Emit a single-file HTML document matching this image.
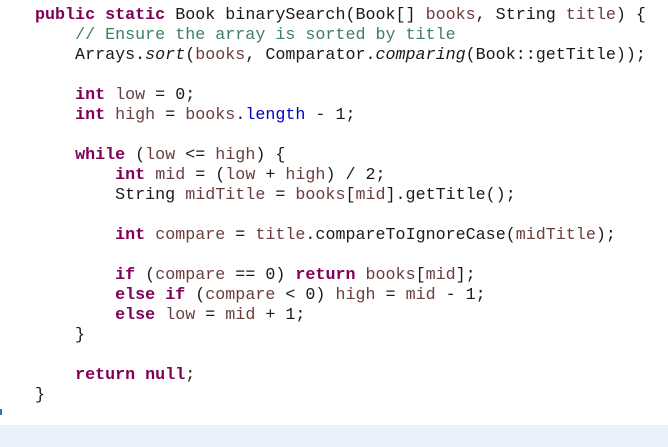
<!DOCTYPE html>
<html><head><style>
body{margin:0;width:668px;height:447px;overflow:hidden;background:#fff;position:relative}
pre{margin:0;position:absolute;left:35px;top:-14px;font-family:"Liberation Mono",monospace;font-size:16.7px;line-height:20px;color:#1a1a1a}
.k{color:#7f0055;font-weight:bold}.p{color:#6a3e3e}.c{color:#3f7f5f}.f{color:#0000c0}.i{font-style:italic}
.band{position:absolute;left:0;top:425px;width:668px;height:22px;background:#e8f0fb}
.mk{position:absolute;left:0;top:409px;width:2px;height:6px;background:#3a6fc0}
</style></head><body>
<div class="band"></div><div class="mk"></div>
<pre><span class="c">    // ...</span>
<span class="k">public</span> <span class="k">static</span> Book binarySearch(Book[] <span class="p">books</span>, String <span class="p">title</span>) {
    <span class="c">// Ensure the array is sorted by title</span>
    Arrays.<span class="i">sort</span>(<span class="p">books</span>, Comparator.<span class="i">comparing</span>(Book::getTitle));

    <span class="k">int</span> <span class="p">low</span> = 0;
    <span class="k">int</span> <span class="p">high</span> = <span class="p">books</span>.<span class="f">length</span> - 1;

    <span class="k">while</span> (<span class="p">low</span> &lt;= <span class="p">high</span>) {
        <span class="k">int</span> <span class="p">mid</span> = (<span class="p">low</span> + <span class="p">high</span>) / 2;
        String <span class="p">midTitle</span> = <span class="p">books</span>[<span class="p">mid</span>].getTitle();

        <span class="k">int</span> <span class="p">compare</span> = <span class="p">title</span>.compareToIgnoreCase(<span class="p">midTitle</span>);

        <span class="k">if</span> (<span class="p">compare</span> == 0) <span class="k">return</span> <span class="p">books</span>[<span class="p">mid</span>];
        <span class="k">else</span> <span class="k">if</span> (<span class="p">compare</span> &lt; 0) <span class="p">high</span> = <span class="p">mid</span> - 1;
        <span class="k">else</span> <span class="p">low</span> = <span class="p">mid</span> + 1;
    }

    <span class="k">return</span> <span class="k">null</span>;
}</pre>
</body></html>
